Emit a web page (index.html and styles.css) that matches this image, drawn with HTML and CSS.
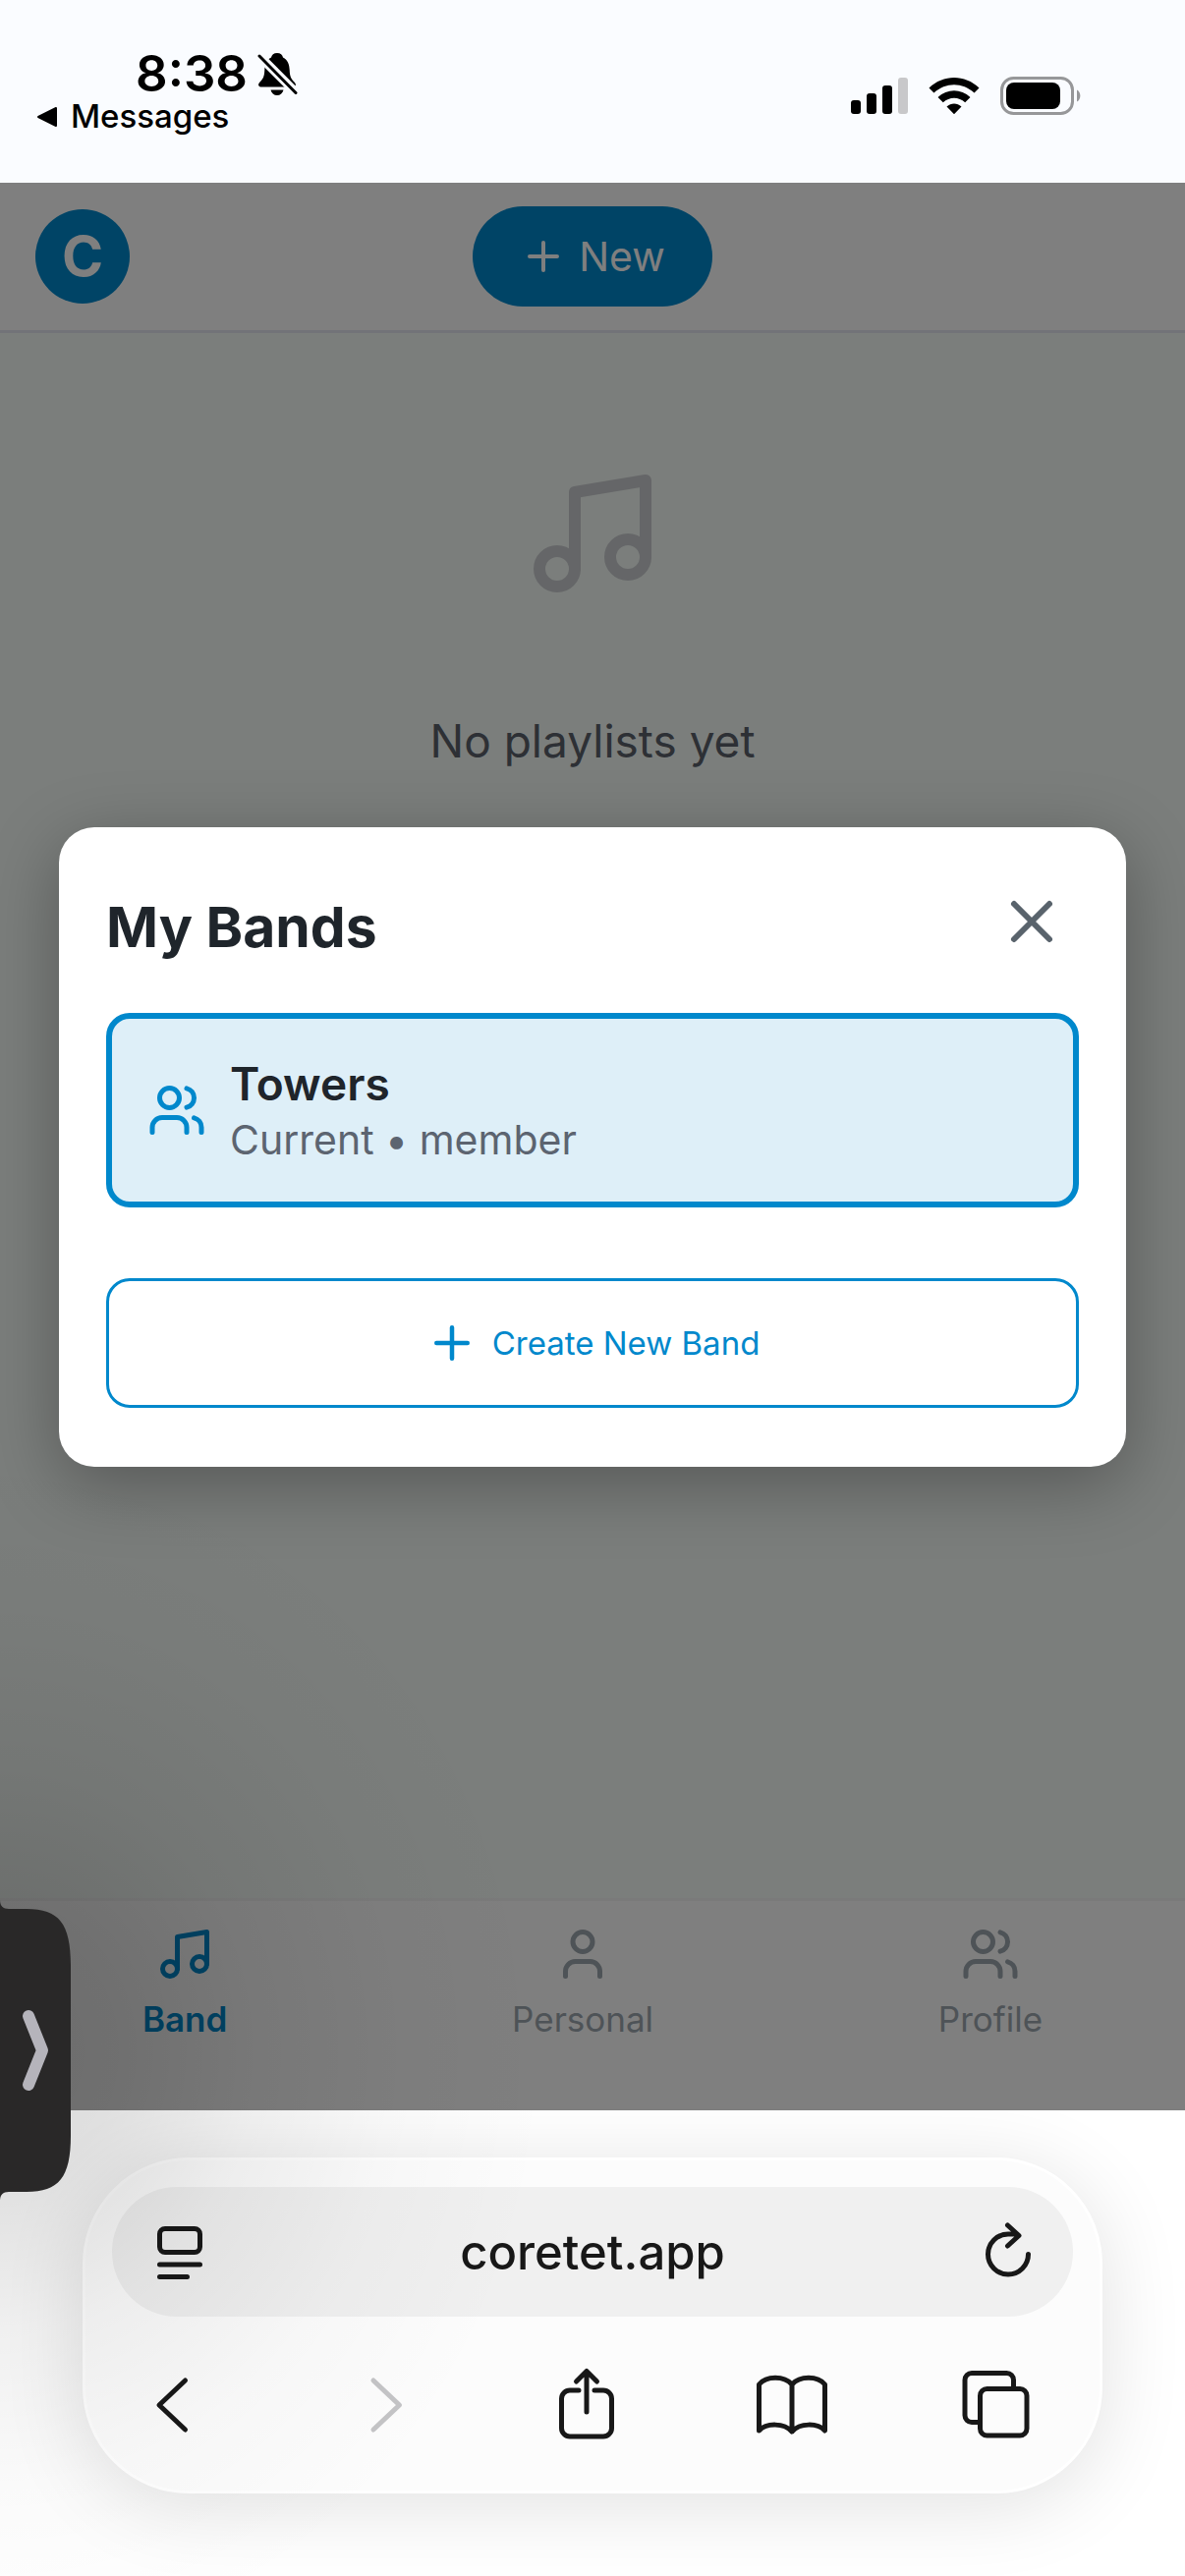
FILE: index.html
```html
<!DOCTYPE html>
<html lang="en">
<head>
<meta charset="utf-8">
<meta name="viewport" content="width=device-width, initial-scale=1">
<title>Coretet</title>
<link rel="stylesheet" href="styles.css">
</head>
<body>
<svg class="sprite" aria-hidden="true">
  <symbol id="i-plus" viewBox="0 0 24 24"><path d="M5 12h14M12 5v14"/></symbol>
  <symbol id="i-x" viewBox="0 0 24 24"><path d="M18 6 6 18M6 6l12 12"/></symbol>
  <symbol id="i-music" viewBox="0 0 24 24"><path d="M9 18V5l12-2v13"/><circle cx="6" cy="18" r="3"/><circle cx="18" cy="16" r="3"/></symbol>
  <symbol id="i-user" viewBox="0 0 24 24"><path d="M19 21v-2a4 4 0 0 0-4-4H9a4 4 0 0 0-4 4v2"/><circle cx="12" cy="7" r="4"/></symbol>
  <symbol id="i-users" viewBox="0 0 24 24"><path d="M16 21v-2a4 4 0 0 0-4-4H6a4 4 0 0 0-4 4v2"/><circle cx="9" cy="7" r="4"/><path d="M22 21v-2a4 4 0 0 0-3-3.87M16 3.13a4 4 0 0 1 0 7.75"/></symbol>
</svg>

<header class="status-bar">
  <div class="status-left">
    <div class="status-time">
      <time>8:38</time>
      <svg class="bell" viewBox="0 0 42 48" aria-label="Silent mode">
        <path d="M21 3c-3.500 0-5.500 2-6 4.500C10 10 8.500 15 8.300 20 8 27 7 29 3.500 32.500 1 35 2 37.500 5 37.500h32c3 0 4-2.500 1.500-5C35 29 34 27 33.700 20 33.500 15 32 10 27 7.500 26.500 5 24.500 3 21 3z"/>
        <path d="M14.500 40.500h13c-.8 3.500-3.300 5.500-6.500 5.500s-5.700-2-6.500-5.500z"/>
        <path class="bell-gap" d="M1 4l41 41"/>
        <path class="bell-slash" d="M3 6l37 37.500"/>
      </svg>
    </div>
    <a class="status-back" href="#messages">
      <svg class="back-mark" viewBox="0 0 24 24"><path d="M3 12 21 3v18z"/></svg>
      <span>Messages</span>
    </a>
  </div>
  <div class="status-right">
    <svg class="signal" viewBox="0 0 60 39" aria-label="Signal">
      <rect x="1" y="24" width="10" height="14" rx="3"/>
      <rect x="17" y="17" width="10" height="21" rx="3"/>
      <rect x="33" y="9" width="10" height="29" rx="3"/>
      <rect class="off" x="49" y="1" width="10" height="37" rx="3"/>
    </svg>
    <svg class="wifi" viewBox="0 0 54 39" aria-label="Wi-Fi">
      <path d="M1.500 11.500C16-2.500 38-2.500 52.500 11.500l-5 5c-12-11-29-11-41 0zM10.500 21c9.500-9 23.500-9 33 0l-5.300 5.300c-6.500-6-15.900-6-22.400 0zM19.500 30.500c4.500-4 10.500-4 15 0L27 38.300z"/>
    </svg>
    <svg class="battery" viewBox="0 0 84 39" aria-label="Battery">
      <rect class="shell" x="2.500" y="1.500" width="72" height="36" rx="12"/>
      <rect x="7" y="6" width="55" height="27" rx="8"/>
      <path class="nub" d="M79 13.500c4.500 2 4.500 10 0 12z"/>
    </svg>
  </div>
</header>

<div class="app">
  <div class="app-header">
    <button class="avatar" type="button">C</button>
    <button class="new-button" type="button"><svg class="icon icon-48"><use href="#i-plus"/></svg><span>New</span></button>
  </div>
  <main class="empty-state">
    <svg class="icon icon-144"><use href="#i-music"/></svg>
    <p>No playlists yet</p>
  </main>
  <nav class="tab-bar">
    <a class="tab tab-active" href="#band"><svg class="icon icon-60"><use href="#i-music"/></svg><span>Band</span></a>
    <a class="tab" href="#personal"><svg class="icon icon-60"><use href="#i-user"/></svg><span>Personal</span></a>
    <a class="tab" href="#profile"><svg class="icon icon-60"><use href="#i-users"/></svg><span>Profile</span></a>
  </nav>

  <div class="overlay">
    <section class="modal" role="dialog" aria-modal="true" aria-labelledby="modal-title">
      <div class="modal-header">
        <h2 id="modal-title">My Bands</h2>
        <button class="close" type="button" aria-label="Close"><svg class="icon icon-72"><use href="#i-x"/></svg></button>
      </div>
      <button class="band" type="button">
        <svg class="icon icon-60"><use href="#i-users"/></svg>
        <span class="band-text">
          <span class="band-name">Towers</span>
          <span class="band-role">Current • member</span>
        </span>
      </button>
      <button class="create" type="button"><svg class="icon icon-54"><use href="#i-plus"/></svg><span>Create New Band</span></button>
    </section>
  </div>
</div>

<footer class="browser">
  <div class="browser-panel">
    <div class="address">
      <button class="tool" type="button" aria-label="Page menu">
        <svg viewBox="0 0 72 72"><rect x="18.500" y="12.500" width="41" height="24" rx="5.500"/><path d="M18.500 49h41M18.500 61.500h28"/></svg>
      </button>
      <input type="text" value="coretet.app" aria-label="Address">
      <button class="tool" type="button" aria-label="Reload">
        <svg viewBox="0 0 72 72"><path d="M56.500 38.500A20.500 20.500 0 1 1 36 18h9M35.500 9l11.500 10.500L35.500 30"/></svg>
      </button>
    </div>
    <div class="toolbar">
      <button class="tool" type="button" aria-label="Back"><svg viewBox="0 0 72 72"><path d="M44.500 12 18 37l26.500 25"/></svg></button>
      <button class="tool" type="button" aria-label="Forward" disabled><svg viewBox="0 0 72 72"><path d="M27 12l26.500 25L27 62"/></svg></button>
      <button class="tool" type="button" aria-label="Share"><svg viewBox="0 0 72 72"><path d="M28 22h-9a8.500 8.500 0 0 0-8.500 8.500v30A8.500 8.500 0 0 0 19 69h34a8.500 8.500 0 0 0 8.500-8.500v-30A8.500 8.500 0 0 0 53 22h-9M36 44V3M25.500 13 36 2.500 46.500 13"/></svg></button>
      <button class="tool" type="button" aria-label="Bookmarks"><svg viewBox="0 0 72 72"><path d="M36 17v47M36 16C28 7 10 7 2.500 16v47C10 55 28 55 36 64c8-9 26-9 33.500-1V16C62 7 44 7 36 16z"/></svg></button>
      <button class="tool" type="button" aria-label="Tabs"><svg viewBox="0 0 72 72"><path d="M18 54.500h-7a7 7 0 0 1-7-7v-36a7 7 0 0 1 7-7h35.500a7 7 0 0 1 7 7V19"/><rect x="19.500" y="20.500" width="47.500" height="47.500" rx="7"/></svg></button>
    </div>
  </div>
</footer>

<div class="side-glow"></div>
<button class="side-tab" type="button" aria-label="Open side panel">
  <svg viewBox="0 0 75 306"><path class="side-shape" d="M0 0c0 6 3 9 9 9h18c33 0 45 15 45 57v174c0 42-12 57-45 57H9c-6 0-9 3-9 9z"/><path class="side-chevron" d="M29 118l14 35-14 35"/></svg>
</button>
</body>
</html>
```
FILE: styles.css
```css
* { box-sizing: border-box; }

body {
  position: relative;
  display: flex;
  flex-direction: column;
  min-height: 100vh;
  margin: 0;
  overflow-x: hidden;
  background: #ffffff;
  color: #1f252b;
  font-family: Inter, "Liberation Sans", sans-serif;
}

button, input {
  margin: 0;
  padding: 0;
  border: 0;
  background: none;
  color: inherit;
  font: inherit;
}

a { color: inherit; text-decoration: none; }
h2, p { margin: 0; }
svg { display: block; flex: none; }
.sprite { position: absolute; width: 0; height: 0; }

.icon {
  fill: none;
  stroke: currentColor;
  stroke-width: 2;
  stroke-linecap: round;
  stroke-linejoin: round;
}
.icon-48 { width: 48px; height: 48px; }
.icon-54 { width: 54px; height: 54px; }
.icon-60 { width: 60px; height: 60px; }
.icon-72 { width: 72px; height: 72px; }
.icon-144 { width: 144px; height: 144px; }

/* Status bar */
.status-bar {
  display: flex;
  justify-content: space-between;
  align-items: flex-start;
  height: 186px;
  padding: 51px 105px 0 36px;
  background: #fafcff;
  color: #000000;
}
.status-time {
  display: flex;
  align-items: center;
  gap: 9px;
  padding-left: 102px;
  font-size: 51px;
  font-weight: 600;
  line-height: 48px;
}
.bell { width: 42px; height: 48px; }
.bell-gap { stroke: #fafcff; stroke-width: 9; }
.bell-slash { stroke: #000000; stroke-width: 3; stroke-linecap: round; }
.status-back {
  display: flex;
  align-items: center;
  gap: 12px;
  font-size: 33px;
  font-weight: 500;
  line-height: 39px;
}
.back-mark { width: 24px; height: 24px; stroke: #000000; stroke-width: 2; stroke-linejoin: round; }
.status-right { display: flex; gap: 19px; padding-top: 27px; }
.signal { width: 60px; height: 39px; }
.signal .off { fill: #c8c8ca; }
.wifi { width: 54px; height: 39px; }
.battery { width: 84px; height: 39px; }
.shell { fill: none; stroke: #969799; stroke-width: 3; }
.nub { fill: #969799; }

/* App */
.app {
  position: relative;
  display: flex;
  flex: 1;
  flex-direction: column;
  background: #f6fcf8;
}
.app-header {
  display: grid;
  grid-template-columns: 1fr auto 1fr;
  align-items: center;
  padding: 24px 36px;
  border-bottom: 3px solid #e4e6f0;
  background: #ffffff;
}
.avatar {
  width: 96px;
  height: 96px;
  border-radius: 50%;
  background: #0088cc;
  color: #ffffff;
  font-size: 57px;
  font-weight: 700;
  line-height: 96px;
}
.new-button {
  display: flex;
  align-items: center;
  gap: 12px;
  height: 102px;
  padding: 0 48px;
  border-radius: 51px;
  background: #0088cc;
  color: #ffffff;
  font-size: 41px;
}
.empty-state {
  display: flex;
  flex: 1;
  flex-direction: column;
  align-items: center;
  gap: 103px;
  padding: 132px 36px;
  color: #cacdd0;
}
.empty-state p { color: #5a606a; font-size: 46px; line-height: 72px; }
.tab-bar {
  display: flex;
  justify-content: space-around;
  padding: 24px 0 66px;
  border-top: 3px solid #f4f4f4;
  background: #ffffff;
}
.tab {
  display: flex;
  flex-direction: column;
  align-items: center;
  gap: 9px;
  color: #9ca6ae;
  font-size: 35px;
  line-height: 54px;
}
.tab-active { color: #0088cc; font-weight: 600; }

/* Band picker */
.overlay {
  position: absolute;
  inset: 0;
  display: flex;
  align-items: center;
  justify-content: center;
  padding: 60px;
  overflow: hidden;
  background: rgba(0, 0, 0, 0.5);
}
.modal {
  display: flex;
  flex: 1;
  flex-direction: column;
  padding: 48px 48px 60px;
  border-radius: 36px;
  background: #ffffff;
  box-shadow: 0 18px 72px rgba(0, 0, 0, 0.3);
}
.modal-header {
  display: flex;
  justify-content: space-between;
  align-items: flex-start;
  margin-bottom: 33px;
}
.modal-header h2 { font-size: 57px; font-weight: 700; line-height: 108px; }
.close { padding: 12px; color: #59636c; }
.band {
  display: flex;
  align-items: center;
  gap: 24px;
  margin-bottom: 72px;
  padding: 36px;
  border: 6px solid #0088cc;
  border-radius: 24px;
  background: #deeff8;
  color: #0088cc;
  text-align: left;
}
.band-text { display: flex; flex-direction: column; }
.band-name { color: #1f252b; font-size: 46px; font-weight: 600; line-height: 60px; }
.band-role { color: #5c6470; font-size: 41px; line-height: 54px; }
.create {
  display: flex;
  align-items: center;
  justify-content: center;
  gap: 14px;
  height: 132px;
  border: 3px solid #0088cc;
  border-radius: 24px;
  color: #0088cc;
  font-size: 33px;
}

/* Browser controls */
.browser {
  padding: 48px 84px 84px;
  overflow: hidden;
}
.browser-panel {
  padding: 27px;
  padding-bottom: 0;
  border: 3px solid #ffffff;
  border-radius: 108px;
  background: #fcfcfc;
  box-shadow: 0 12px 84px rgba(0, 0, 0, 0.12);
}
.address {
  display: flex;
  align-items: center;
  justify-content: space-between;
  height: 132px;
  padding: 0 30px;
  border-radius: 66px;
  background: #f0f0f0;
}
.address input {
  flex: 1;
  min-width: 0;
  color: #181818;
  font-size: 49px;
  font-weight: 500;
  text-align: center;
}
.toolbar {
  display: flex;
  align-items: center;
  justify-content: space-between;
  height: 177px;
  padding: 0 42px 0 30px;
}
.tool { color: #181818; }
.tool:disabled { color: #c4c4c6; }
.tool svg {
  width: 72px;
  height: 72px;
  overflow: visible;
  fill: none;
  stroke: currentColor;
  stroke-width: 5;
  stroke-linecap: round;
  stroke-linejoin: round;
}

/* Side panel handle, floating over the page */
.side-glow {
  position: absolute;
  bottom: 0;
  left: 0;
  width: 600px;
  height: 1200px;
  background: radial-gradient(560px 620px at 0 665px, rgba(0, 0, 0, 0.15), rgba(0, 0, 0, 0.12) 22%, rgba(0, 0, 0, 0.06) 46%, rgba(0, 0, 0, 0.02) 72%, transparent);
  pointer-events: none;
}
.side-tab {
  position: absolute;
  bottom: 382px;
  left: 0;
}
.side-tab svg { width: 75px; height: 306px; }
.side-shape { fill: #292828; }
.side-chevron {
  fill: none;
  stroke: #b5b4bb;
  stroke-width: 12;
  stroke-linecap: round;
  stroke-linejoin: round;
}
```
